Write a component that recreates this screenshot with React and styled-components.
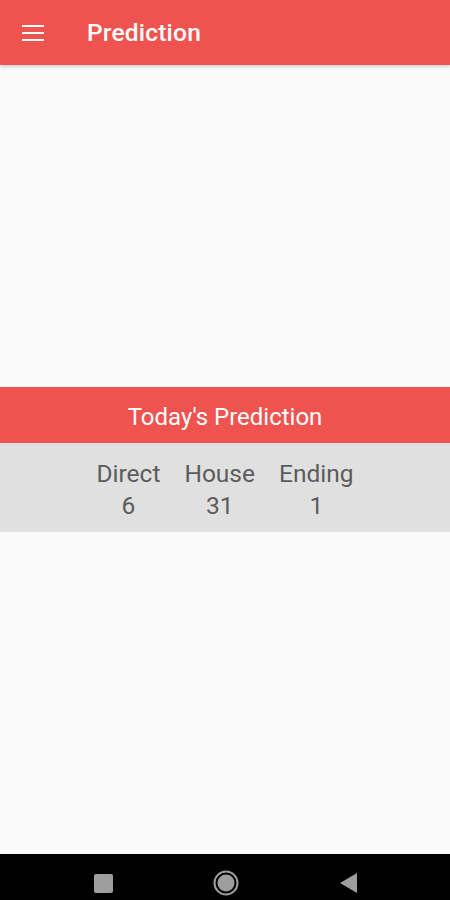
import styled, { createGlobalStyle } from 'styled-components'

const GlobalStyle = createGlobalStyle`
  html, body {
    margin: 0;
    padding: 0;
    background: #fafafa;
    font-family: Roboto, "Liberation Sans", sans-serif;
  }
`

const Screen = styled.div`
  width: 450px;
  height: 900px;
  display: flex;
  flex-direction: column;
  background: #fafafa;
`

const AppBar = styled.header`
  height: 65px;
  flex-shrink: 0;
  display: flex;
  align-items: center;
  padding-left: 22px;
  background: #ef5350;
  box-shadow: 0 2px 3px rgba(0, 0, 0, 0.15);
`

const MenuButton = styled.div`
  width: 22px;
  height: 16px;
  display: flex;
  flex-direction: column;
  justify-content: space-between;
  margin-right: 43px;

  span {
    display: block;
    height: 2px;
    background: #fff;
  }
`

const Title = styled.h1`
  margin: 0;
  font-size: 24.5px;
  font-weight: 500;
  color: #fff;
  letter-spacing: 0.2px;
`

const Content = styled.main`
  flex: 1;
  display: flex;
  flex-direction: column;
  justify-content: center;
`

const Banner = styled.div`
  height: 56px;
  display: flex;
  align-items: center;
  justify-content: center;
  padding-top: 3px;
  box-sizing: border-box;
  background: #ef5350;
  color: #fff;
  font-size: 24px;
`

const Panel = styled.div`
  display: flex;
  justify-content: center;
  gap: 24px;
  padding: 15px 0 10px;
  background: #e0e0e0;
`

const Column = styled.div`
  display: flex;
  flex-direction: column;
  align-items: center;
  color: #5c5c5c;
  font-size: 24.5px;
  line-height: 32px;
`

const NavBar = styled.nav`
  height: 46px;
  flex-shrink: 0;
  display: flex;
  align-items: center;
  background: #000;
  padding-top: 12px;
  box-sizing: border-box;
`

const NavSlot = styled.div`
  flex: 1;
  display: flex;
  justify-content: center;
`

const items = [
  { label: 'Direct', value: 6 },
  { label: 'House', value: 31 },
  { label: 'Ending', value: 1 },
]

function App() {
  return (
    <Screen>
      <GlobalStyle />
      <AppBar>
        <MenuButton>
          <span />
          <span />
          <span />
        </MenuButton>
        <Title>Prediction</Title>
      </AppBar>
      <Content>
        <Banner>Today's Prediction</Banner>
        <Panel>
          {items.map((item) => (
            <Column key={item.label}>
              <span>{item.label}</span>
              <span>{item.value}</span>
            </Column>
          ))}
        </Panel>
      </Content>
      <NavBar>
        <NavSlot style={{ marginLeft: 42 }}>
          <svg width="19" height="19" viewBox="0 0 19 19">
            <rect x="0" y="0" width="19" height="19" rx="2" fill="#9e9e9e" />
          </svg>
        </NavSlot>
        <NavSlot>
          <svg width="26" height="26" viewBox="0 0 26 26">
            <circle cx="13" cy="13" r="11.5" fill="none" stroke="#9e9e9e" strokeWidth="2" />
            <circle cx="13" cy="13" r="8.5" fill="#9e9e9e" />
          </svg>
        </NavSlot>
        <NavSlot style={{ marginRight: 40 }}>
          <svg width="18" height="20" viewBox="0 0 18 20">
            <polygon points="17,0 17,20 0,10" fill="#9e9e9e" />
          </svg>
        </NavSlot>
      </NavBar>
    </Screen>
  )
}

export default App
